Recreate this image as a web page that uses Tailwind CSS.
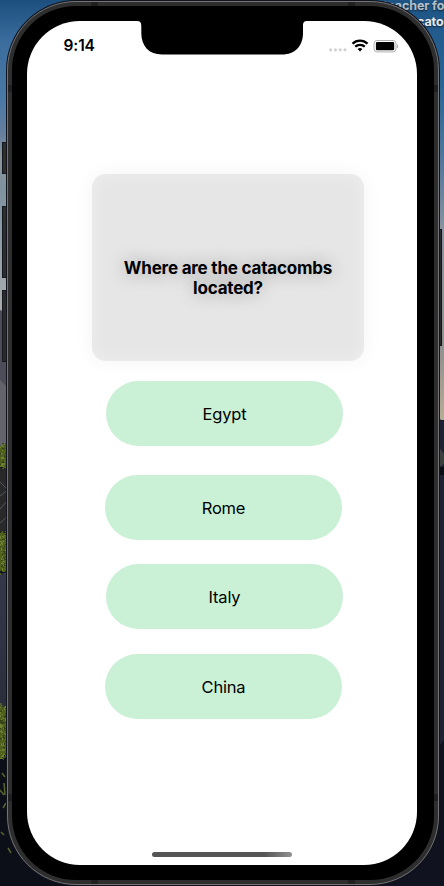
<!DOCTYPE html>
<html lang="en">
<head>
<meta charset="utf-8">
<title>Quiz</title>
<script src="https://cdn.jsdelivr.net/npm/@tailwindcss/browser@4"></script>
</head>
<body class="relative h-[886px] w-[444px] overflow-hidden bg-[#11131f] font-['Inter','Liberation_Sans',sans-serif] text-black">
  <!-- desktop wallpaper -->
  <svg class="absolute inset-0" width="444" height="886" viewBox="0 0 444 886">
    <defs>
      <linearGradient id="skyL" x1="0" y1="0" x2="0" y2="1">
        <stop offset="0" stop-color="#1c4f7e"/><stop offset=".13" stop-color="#3a6d9d"/><stop offset=".32" stop-color="#4a78a5"/><stop offset=".43" stop-color="#667f9d"/><stop offset=".5" stop-color="#8f969b"/><stop offset=".6" stop-color="#7e929f"/><stop offset="1" stop-color="#a9acad"/>
      </linearGradient>
      <linearGradient id="skyR" x1="0" y1="0" x2="0" y2="1">
        <stop offset="0" stop-color="#1e5585"/><stop offset=".2" stop-color="#276597"/><stop offset=".4" stop-color="#56799c"/><stop offset=".55" stop-color="#8b93a0"/><stop offset=".85" stop-color="#96928e"/><stop offset="1" stop-color="#b6ad96"/>
      </linearGradient>
      <linearGradient id="road" x1="0" y1="0" x2="0" y2="1">
        <stop offset="0" stop-color="#34364a"/><stop offset=".5" stop-color="#303344"/><stop offset="1" stop-color="#2a2d3a"/>
      </linearGradient>
      <pattern id="leaf" width="9" height="13" patternUnits="userSpaceOnUse">
        <rect width="9" height="13" fill="#50611f"/><path d="M0 2h3v2h-3zM5 5h3v2h-3zM1 9h2v3h-2z" fill="#6f8033"/><path d="M4 0h2v3h-2zM2 6h3v2h-3zM6 10h3v2h-3z" fill="#34421a"/>
      </pattern>
      <filter id="ruffle" x="-100%" width="300%" y="-10%" height="120%"><feTurbulence type="fractalNoise" baseFrequency=".35" numOctaves="2" seed="4"/><feDisplacementMap in="SourceGraphic" scale="9" xChannelSelector="R" yChannelSelector="G"/></filter>
    </defs>
    <rect width="222" height="312" fill="url(#skyL)"/>
    <rect x="222" width="222" height="420" fill="url(#skyR)"/>
    <path d="M0 310l10 4V450H0z" fill="#4c4d58"/>
    <path d="M0 380l10 10v50l-10 8z" fill="#62636b"/>
    <path d="M0 468h10v66H0z" fill="#292929"/>
    <path d="M0 482l9 9M0 496l9-7M0 509l9-10M0 523l9-8" stroke="#55565a"/>
    <path d="M0 574l12-3v140H0z" fill="url(#road)"/>
    <path d="M0 757h9l25 100 40 29H0z" fill="#0c0e18"/>
    <g fill="url(#leaf)" filter="url(#ruffle)">
      <path d="M-6 447l11-3 8 6v18H-6z"/><path d="M-6 532h20v39l-20 3z"/><path d="M-6 704l20 4v50H-6z"/>
    </g>
    <path d="M2 773l3 4M0 790l4 5M3 808l3-5M1 832l3 3M8 848l3 5M4 783l1 12" stroke="#56632c" stroke-width="1.5"/>
    <path d="M437 418l7 3v440l-7 0z" fill="#1e2132"/>
    <path d="M438 446l6 8v10l-6 4z" fill="#3d3f3f"/>
    <path d="M438 467h6v8h-6z" fill="#0c0d14"/>
    <path d="M444 740v146h-110z" fill="#11121f"/>
  </svg>
  <!-- desktop label beside the device -->
  <p class="absolute -top-[2px] left-[383px] whitespace-nowrap text-[12.5px] leading-4 font-bold tracking-[-0.1px] text-white/70 [text-shadow:0_1px_2px_#000a]">teacher fo</p>
  <p class="absolute top-[14px] left-[417px] whitespace-nowrap text-[12.5px] leading-4 font-bold tracking-[-0.1px] text-white/90 [text-shadow:0_1px_2px_#000a]">cato</p>
  <!-- side keys -->
  <div class="absolute top-[142px] left-[2px] h-8 w-2 border border-[#111820] bg-[#302f2c]"></div>
  <div class="absolute top-[206px] left-[2px] h-[72px] w-2 border border-[#11191f] bg-[#2c2d2c]"></div>
  <div class="absolute top-[290px] left-[2px] h-[72px] w-2 border border-[#17191e] bg-[#2b2a2b]"></div>
  <div class="absolute top-[229px] left-[436px] h-[117px] w-[6px] border border-[#0e1118] bg-[#292a2c]"></div>

  <!-- device -->
  <div class="relative mt-px ml-[7px] h-[884px] w-[432px] rounded-[69px] border border-[#747476] bg-[#2f2e2f] p-[4px] shadow-[0_0_0_1px_#10131b]">
    <div class="h-full w-full rounded-[64px] bg-black pt-[15px] pl-[15px]">
      <main class="relative flex h-[844px] w-[390px] flex-col overflow-hidden rounded-[53px] bg-white">
        <header class="flex h-[50px] shrink-0 items-center justify-between pr-[19px] pl-[36.5px]">
          <span class="text-[15.5px] font-semibold tracking-[-0.1px]">9:14</span>
          <div class="flex items-center">
            <svg width="72" height="16" viewBox="0 0 72 16">
              <g fill="#d2d2d2"><circle cx="4.6" cy="11.8" r="1.6"/><circle cx="9.4" cy="11.8" r="1.6"/><circle cx="14.2" cy="11.8" r="1.6"/><circle cx="19" cy="11.8" r="1.6"/></g>
              <g fill="none" stroke="#000" stroke-width="2.3"><path d="M26.500 5.600a10.800 10.800 0 0 1 15 0"/><path d="M29.200 8.700a7 7 0 0 1 9.600 0"/></g>
              <path d="M34 13.500l-2.400-2.400a3.400 3.400 0 0 1 4.800 0z"/>
              <rect x="48" y="2.5" width="22" height="11.4" rx="3" fill="none" stroke="#b0b0b0"/>
              <rect x="49.900" y="4.100" width="18.300" height="8.200" rx="1.300"/>
              <path d="M71 6.400a1.800 1.800 0 0 1 0 3.600z" fill="#b0b0b0"/>
            </svg>
          </div>
        </header>
        <section class="mt-[103px] ml-[65px] flex h-[187px] w-[272px] shrink-0 items-center justify-center rounded-[14px] bg-[#e6e6e6] pt-[21px] shadow-[0_0_20px_#0000000d,inset_0_0_18px_#ffffff59]">
          <h1 class="text-center text-[17px] leading-[20px] font-bold tracking-[-0.2px] whitespace-nowrap [text-shadow:0_0_18px_#00000059]">Where are the catacombs<br>located?</h1>
        </section>
        <div class="flex flex-col items-start pt-5 pl-[78px] text-[16.5px] tracking-[-0.2px]">
          <button class="ml-px h-[65px] w-[237px] rounded-full bg-[#caf0d5] pt-[2px]">Egypt</button>
          <button class="mt-[29px] h-[65px] w-[237px] rounded-full bg-[#caf0d5] pt-[2px]">Rome</button>
          <button class="mt-6 ml-px h-[65px] w-[237px] rounded-full bg-[#caf0d5] pt-[2px]">Italy</button>
          <button class="mt-[25px] h-[65px] w-[237px] rounded-full bg-[#caf0d5] pt-[2px]">China</button>
        </div>
        <div class="mt-auto mb-2 ml-[125px] h-[5px] w-[140px] rounded-full bg-linear-to-r from-[#555] from-80% to-[#929292]"></div>
        <svg class="absolute top-0 left-[109px]" width="172" height="34" viewBox="0 0 172 34">
          <path d="M0 0H172C168 0 167 1 167 5V12C167 25 159 33.5 146 33.5H26C13 33.5 5.300 25 5.300 12V5C5.300 1 4 0 0 0Z"/>
        </svg>
      </main>
    </div>
    <!-- antenna bands -->
    <i class="absolute top-[83px] left-0 h-[7px] w-1 bg-[#202020]"></i>
    <i class="absolute top-[83px] right-0 h-[7px] w-1 bg-[#202020]"></i>
    <i class="absolute top-[792px] left-0 h-[7px] w-1 bg-[#202020]"></i>
    <i class="absolute top-[792px] right-0 h-[7px] w-1 bg-[#202020]"></i>
    <i class="absolute top-0 left-[83px] h-1 w-[7px] bg-[#202020]"></i>
    <i class="absolute top-0 right-[83px] h-1 w-[7px] bg-[#202020]"></i>
    <i class="absolute bottom-0 left-[83px] h-1 w-[7px] bg-[#202020]"></i>
    <i class="absolute right-[83px] bottom-0 h-1 w-[7px] bg-[#202020]"></i>
  </div>
</body>
</html>
